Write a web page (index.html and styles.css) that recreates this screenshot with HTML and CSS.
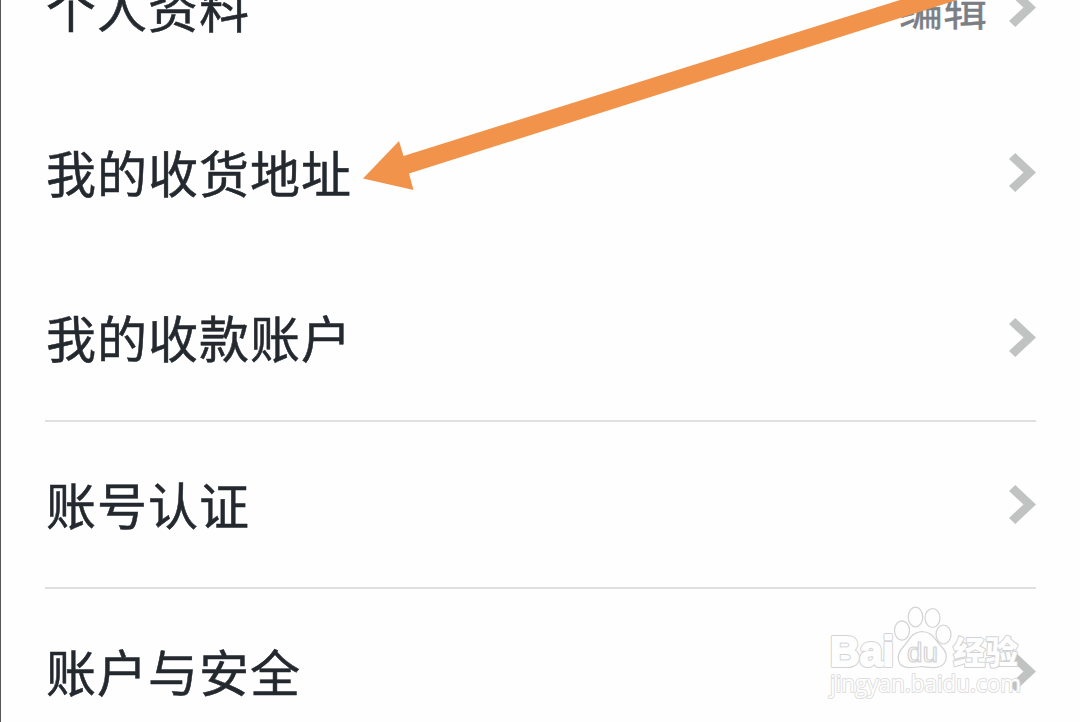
FILE: index.html
```html
<!DOCTYPE html>
<html lang="zh-CN">
<head>
<meta charset="utf-8">
<title>设置</title>
<link rel="stylesheet" href="styles.css">
</head>
<body>
<main class="screen">
  <ul class="list">
    <li class="row"><span class="label">个人资料</span><span class="value">编辑</span><svg class="chevron" viewBox="0 0 27 39"><path d="M0 6 6.300 0 27 19.500 6.300 39 0 33 14.500 19.500z"/></svg></li>
    <li class="row"><span class="label">我的收货地址</span><svg class="chevron" viewBox="0 0 27 39"><path d="M0 6 6.300 0 27 19.500 6.300 39 0 33 14.500 19.500z"/></svg></li>
    <li class="row divided"><span class="label">我的收款账户</span><svg class="chevron" viewBox="0 0 27 39"><path d="M0 6 6.300 0 27 19.500 6.300 39 0 33 14.500 19.500z"/></svg></li>
    <li class="row divided"><span class="label">账号认证</span><svg class="chevron" viewBox="0 0 27 39"><path d="M0 6 6.300 0 27 19.500 6.300 39 0 33 14.500 19.500z"/></svg></li>
    <li class="row"><span class="label">账户与安全</span><svg class="chevron" viewBox="0 0 27 39"><path d="M0 6 6.300 0 27 19.500 6.300 39 0 33 14.500 19.500z"/></svg></li>
  </ul>
  <svg class="arrow" viewBox="0 0 1080 200"><path d="M363 178.500 399 141 403.500 156 900 0H957L409 173.500 413.500 190z"/></svg>
  <svg class="watermark" viewBox="0 0 210 110">
    <g class="edge">
      <text id="brand" class="brand" x="10" y="66" textLength="64" lengthAdjust="spacingAndGlyphs">Bai</text>
    </g>
    <use class="face" href="#brand"/>
    <g class="mark">
      <ellipse cx="82" cy="30.500" rx="7.500" ry="9.700"/>
      <ellipse cx="95.500" cy="17" rx="7.300" ry="9.800"/>
      <ellipse cx="112.500" cy="18" rx="7.500" ry="9.500"/>
      <ellipse cx="123.500" cy="34.500" rx="7.500" ry="9.500"/>
      <path d="M102 31.500C91 32 89 41 84 46C78 52 77 57 79 62C82 69 90 68 102 66.500C114 68 121 69 125 62C128 56 125 50 121 46C115 40 113 32 102 31.500z"/>
      <text class="du" x="87" y="62" textLength="31" lengthAdjust="spacingAndGlyphs">du</text>
      <text class="cn" x="133" y="64" textLength="65" lengthAdjust="spacingAndGlyphs">经验</text>
      <text class="url" x="10" y="91.500" textLength="191" lengthAdjust="spacingAndGlyphs">jingyan.baidu.com</text>
    </g>
  </svg>
</main>
</body>
</html>
```
FILE: styles.css
```css
* { box-sizing: border-box; }
body { margin: 0; background: #fefefe; }
.screen {
  position: relative;
  width: 1080px;
  height: 722px;
  overflow: hidden;
  border-left: 1px solid #57585a;
  background: #fefefe;
  font-family: "Noto Sans CJK SC", sans-serif;
}
.list { list-style: none; margin: -75px 44px 0; padding: 0; }
.row {
  display: flex;
  align-items: center;
  height: 165px;
  color: #24292f;
}
.divided { height: 167px; border-bottom: 2px solid #dedfdf; }
.label {
  padding: 0 0 4px 1px;
  font-size: 50px;
  letter-spacing: 1px;
  line-height: 72px;
  white-space: nowrap;
  -webkit-text-stroke: 0.5px currentColor;
}
.value {
  margin-left: auto;
  margin-right: 22px;
  padding-bottom: 1px;
  font-size: 44px;
  line-height: 64px;
  color: #7b7e85;
  -webkit-text-stroke: 0.4px currentColor;
}
.chevron { width: 27px; height: 39px; margin-left: auto; fill: #c1c2c2; flex: none; }
.value + .chevron { margin-left: 0; }
.arrow { position: absolute; left: -1px; top: 0; width: 1080px; height: 200px; fill: #f2934b; }
.watermark { position: absolute; left: 819px; top: 600px; width: 210px; height: 110px; }
.edge { fill: #d3d3d3; stroke: #d3d3d3; stroke-width: 4px; stroke-linejoin: round; }
.face { fill: #fefefe; stroke: #fefefe; stroke-width: 2px; stroke-linejoin: round; }
.mark { fill: #fefefe; stroke: #d3d3d3; stroke-width: 1.2px; stroke-linejoin: round; }
.brand { font: bold 43px "Liberation Sans", sans-serif; }
.du { font: 27px "Liberation Sans", sans-serif; }
.cn { font: 900 32px "Noto Sans CJK SC", sans-serif; stroke-width: 2px; paint-order: stroke; }
.url { font: 23px "Open Sans", sans-serif; stroke: #dedede; stroke-width: 2px; paint-order: stroke; }
```
